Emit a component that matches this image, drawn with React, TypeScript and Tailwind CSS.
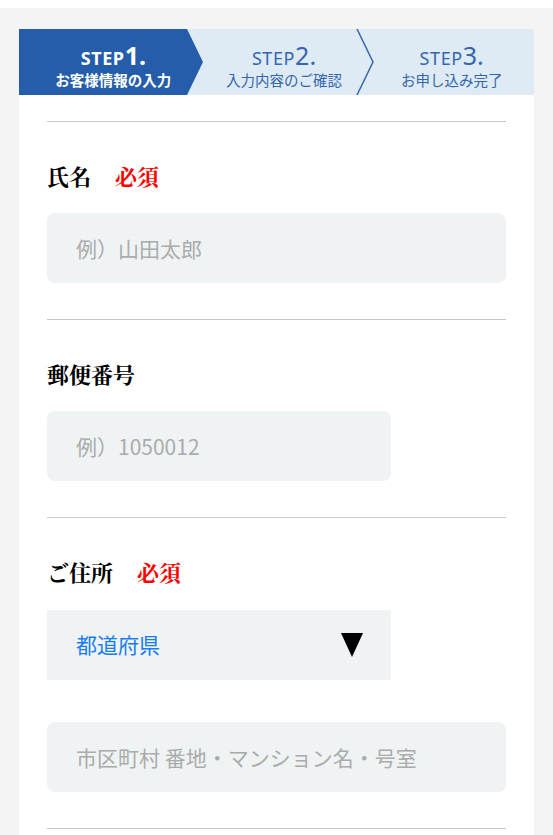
import React from "react";

const sans = { fontFamily: '"Noto Sans CJK JP", "Noto Sans", sans-serif' };
const serif = { fontFamily: '"Noto Serif CJK JP", "Noto Sans CJK JP", serif' };

function Step({ num, label, active, pl }: { num: string; label: string; active?: boolean; pl: string }) {
  return (
    <div className={`relative z-10 flex flex-1 flex-col items-center pt-[14px] ${pl} ${active ? "text-white" : "text-[#3566ad]"}`}>
      <div className={`flex items-baseline leading-[24px] ${active ? "font-bold" : "font-normal"}`} style={{ fontFamily: '"Noto Sans", "Noto Sans CJK JP", sans-serif' }}>
        <span className="text-[18px] tracking-[0.6px]">STEP</span>
        <span className="text-[25px]">{num}.</span>
      </div>
      <div className={`text-[14.5px] leading-[20px] ${active ? "font-bold" : "font-normal"}`}>{label}</div>
    </div>
  );
}

function Label({ text, required }: { text: string; required?: boolean }) {
  return (
    <div className="flex text-[22px] font-bold leading-[32px] text-black" style={serif}>
      <span>{text}</span>
      {required && <span className="ml-[24px] text-[#ff0000]">必須</span>}
    </div>
  );
}

export default function App() {
  return (
    <div className="min-h-screen bg-white pt-[8px]" style={sans}>
      <div className="min-h-[827px] bg-[#f4f4f4] px-[19px] pt-[21px]">
        <div className="bg-white">
          <div className="relative flex h-[66px] bg-[#deebf5]">
            <svg className="absolute left-0 top-0" width="515" height="66" viewBox="0 0 515 66">
              <polygon points="0,0 168,0 184,33 168,66 0,66" fill="#255dab" />
              <polyline points="338,0 354,33 338,66" fill="none" stroke="#3566ad" strokeWidth="1.5" />
            </svg>
            <Step num="1" label="お客様情報の入力" active pl="pl-[12px]" />
            <Step num="2" label="入力内容のご確認" pl="pl-[6px]" />
            <Step num="3" label="お申し込み完了" pl="pl-[3px]" />
          </div>

          <div className="px-[28px] pt-[26px]">
            <section className="border-t border-[#c8c8c8] pb-[36px] pt-[38px]">
              <Label text="氏名" required />
              <input
                className="mt-[21px] block h-[70px] w-full rounded-lg bg-[#eff3f4] px-[29px] text-[21px] text-black outline-none placeholder:text-[#ababab]"
                placeholder="例）山田太郎"
              />
            </section>

            <section className="border-t border-[#c8c8c8] pb-[36px] pt-[38px]">
              <Label text="郵便番号" />
              <input
                className="mt-[21px] block h-[70px] w-3/4 rounded-lg bg-[#eff3f4] px-[29px] text-[21px] text-black outline-none placeholder:text-[#ababab]"
                placeholder="例）1050012"
              />
            </section>

            <section className="border-t border-[#c8c8c8] pb-[36px] pt-[38px]">
              <Label text="ご住所" required />
              <div className="mt-[22px] flex h-[70px] w-3/4 items-center justify-between bg-[#eff3f4] pl-[29px] pr-[28px]">
                <span className="text-[21px] text-[#1a7cf5]">都道府県</span>
                <svg width="22" height="24" viewBox="0 0 22 24">
                  <polygon points="0,0 22,0 11,24" fill="#000" />
                </svg>
              </div>
              <input
                className="mt-[42px] block h-[70px] w-full rounded-lg bg-[#eff3f4] px-[29px] text-[21px] text-black outline-none placeholder:text-[#ababab]"
                placeholder="市区町村 番地・マンション名・号室"
              />
            </section>
            <div className="border-t border-[#c8c8c8] pb-[40px]" />
          </div>
        </div>
      </div>
    </div>
  );
}
